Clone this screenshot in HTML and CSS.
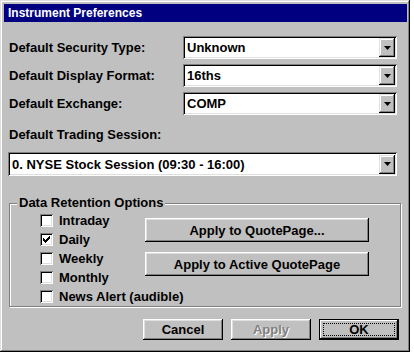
FILE: index.html
```html
<!DOCTYPE html>
<html lang="en">
<head>
    <meta charset="UTF-8">
    <meta name="viewport" content="width=device-width, initial-scale=1.0">
    <title>Instrument Preferences</title>
    <link rel="stylesheet" href="styles.css">
</head>
<body>
    <div class="window">
        <div class="titlebar">Instrument Preferences</div>
        <div class="content">
            <div class="fields">
                <label class="label">Default Security Type:</label>
                <div class="combo">
                    <span class="combo-value">Unknown</span>
                    <span class="combo-btn"><svg width="7" height="4" viewBox="0 0 7 4"><polygon points="0,0 7,0 3.5,4" fill="#000"/></svg></span>
                </div>
                <label class="label">Default Display Format:</label>
                <div class="combo">
                    <span class="combo-value">16ths</span>
                    <span class="combo-btn"><svg width="7" height="4" viewBox="0 0 7 4"><polygon points="0,0 7,0 3.5,4" fill="#000"/></svg></span>
                </div>
                <label class="label">Default Exchange:</label>
                <div class="combo">
                    <span class="combo-value">COMP</span>
                    <span class="combo-btn"><svg width="7" height="4" viewBox="0 0 7 4"><polygon points="0,0 7,0 3.5,4" fill="#000"/></svg></span>
                </div>
            </div>

            <div class="session-label">Default Trading Session:</div>
            <div class="combo combo-wide">
                <span class="combo-value">0. NYSE Stock Session (09:30 - 16:00)</span>
                <span class="combo-btn"><svg width="7" height="4" viewBox="0 0 7 4"><polygon points="0,0 7,0 3.5,4" fill="#000"/></svg></span>
            </div>

            <div class="group">
                <span class="group-title">Data Retention Options</span>
                <div class="checks">
                    <label class="check"><span class="box"></span>Intraday</label>
                    <label class="check"><span class="box"><svg width="7" height="7" viewBox="0 0 7 7"><path d="M0 2h1v3H0zM1 3h1v3H1zM2 4h1v3H2zM3 3h1v3H3zM4 2h1v3H4zM5 1h1v3H5zM6 0h1v3H6z" fill="#000"/></svg></span>Daily</label>
                    <label class="check"><span class="box"></span>Weekly</label>
                    <label class="check"><span class="box"></span>Monthly</label>
                    <label class="check"><span class="box"></span>News Alert (audible)</label>
                </div>
                <div class="group-actions">
                    <button class="btn btn-wide">Apply to QuotePage...</button>
                    <button class="btn btn-wide">Apply to Active QuotePage</button>
                </div>
            </div>

            <div class="footer">
                <button class="btn">Cancel</button>
                <button class="btn" disabled>Apply</button>
                <button class="btn btn-default"><span class="focus">OK</span></button>
            </div>
        </div>
    </div>
</body>
</html>
```

FILE: styles.css
```css
body {
    margin: 0;
    background-color: #fff;
    font-family: "Liberation Sans", Arial, sans-serif;
    font-size: 13px;
    font-weight: bold;
    color: #000;
}
.window {
    width: 410px;
    height: 352px;
    box-sizing: border-box;
    padding: 4px 3px 3px 4px;
    background-color: #c0c0c0;
    box-shadow: inset -1px -1px #000, inset 1px 1px #dfdfdf, inset -2px -2px #808080, inset 2px 2px #fff;
}
.titlebar {
    height: 18px;
    line-height: 18px;
    padding-left: 4px;
    background-color: #000080;
    color: #fff;
    font-size: 12px;
}
.content {
    padding: 14px 0 0 4px;
}
.fields {
    display: grid;
    grid-template-columns: 175px 214px;
    grid-auto-rows: 23px;
    row-gap: 5px;
    align-items: center;
}
.label {
    padding-left: 1px;
}
.combo {
    height: 23px;
    box-sizing: border-box;
    display: flex;
    align-items: center;
    justify-content: space-between;
    padding: 2px;
    background-color: #fff;
    box-shadow: inset 1px 1px #808080, inset -1px -1px #fff, inset 2px 2px #000, inset -2px -2px #dfdfdf;
}
.combo-value {
    padding-left: 2px;
}
.combo-btn {
    width: 16px;
    height: 19px;
    display: flex;
    align-items: center;
    justify-content: center;
    background-color: #c0c0c0;
    box-shadow: inset -1px -1px #000, inset 1px 1px #dfdfdf, inset -2px -2px #808080, inset 2px 2px #fff;
}
.session-label {
    margin-top: 12px;
    height: 16px;
    line-height: 16px;
    padding-left: 1px;
}
.combo-wide {
    width: 389px;
    margin-top: 9px;
    height: 24px;
}
.group {
    position: relative;
    margin: 27px 0 0 1px;
    width: 392px;
    height: 104px;
    box-sizing: border-box;
    border: 1px solid #808080;
    box-shadow: inset 1px 1px #fff, 1px 1px #fff;
    display: flex;
    padding: 7px 0 0 30px;
}
.group-title {
    position: absolute;
    top: -9px;
    left: 7px;
    padding: 0 2px;
    line-height: 16px;
    background-color: #c0c0c0;
}
.checks {
    width: 105px;
    flex-shrink: 0;
    display: flex;
    flex-direction: column;
}
.check {
    height: 19px;
    flex-shrink: 0;
    display: flex;
    align-items: center;
    white-space: nowrap;
}
.box {
    width: 13px;
    height: 13px;
    flex-shrink: 0;
    box-sizing: border-box;
    margin-right: 6px;
    display: flex;
    align-items: center;
    justify-content: center;
    background-color: #fff;
    box-shadow: inset 1px 1px #808080, inset -1px -1px #fff, inset 2px 2px #000, inset -2px -2px #dfdfdf;
}
.group-actions {
    display: flex;
    flex-direction: column;
    gap: 10px;
    margin-top: 7px;
}
.btn {
    font: inherit;
    color: #000;
    width: 80px;
    height: 21px;
    padding: 0;
    border: none;
    background-color: #c0c0c0;
    box-shadow: inset -1px -1px #000, inset 1px 1px #fff, inset -2px -2px #808080, inset 2px 2px #dfdfdf;
}
.btn-wide {
    width: 224px;
    height: 24px;
}
.btn:disabled {
    color: #808080;
    text-shadow: 1px 1px #fff;
}
.footer {
    display: flex;
    justify-content: flex-end;
    gap: 8px;
    width: 391px;
    margin-top: 12px;
}
.btn-default {
    outline: 1px solid #000;
    outline-offset: -1px;
    box-shadow: inset -2px -2px #000, inset 2px 2px #fff, inset -3px -3px #808080, inset 1px 1px #000;
    padding: 4px;
}
.focus {
    display: block;
    height: 100%;
    box-sizing: border-box;
    border: 1px dotted #000;
    line-height: 11px;
}
```
